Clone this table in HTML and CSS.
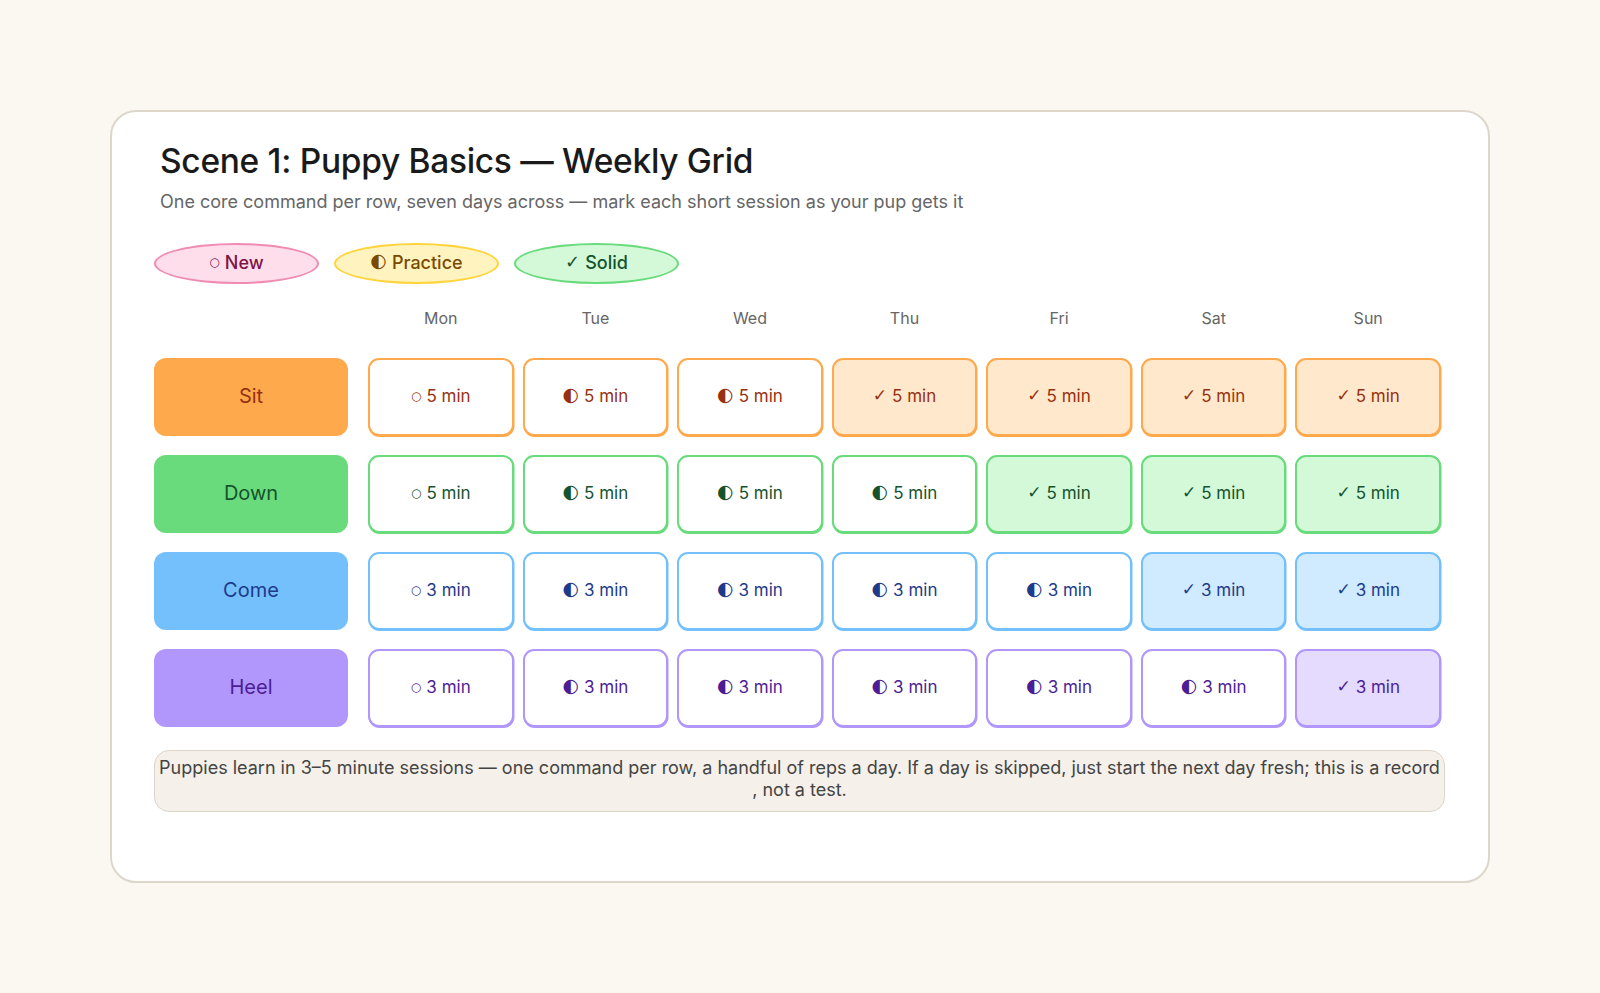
FILE: index.html
```html
<!DOCTYPE html>
<html lang="en">
<head>
<meta charset="utf-8">
<title>Scene 1: Puppy Basics — Weekly Grid</title>
<link rel="stylesheet" href="styles.css">
</head>
<body>
<main class="card">
  <header class="head">
    <h1 class="title">Scene 1: Puppy Basics — Weekly Grid</h1>
    <p class="subtitle">One core command per row, seven days across — mark each short session as your pup gets it</p>
  </header>

  <div class="legend">
    <span class="pill pill-new"><span class="ico ico-o">○</span> New</span>
    <span class="pill pill-practice"><span class="ico ico-h">◐</span> Practice</span>
    <span class="pill pill-solid"><span class="ico ico-c">✓</span> Solid</span>
  </div>

  <div class="grid">
    <div class="corner"></div>
    <div class="day">Mon</div>
    <div class="day">Tue</div>
    <div class="day">Wed</div>
    <div class="day">Thu</div>
    <div class="day">Fri</div>
    <div class="day">Sat</div>
    <div class="day">Sun</div>

    <div class="label sit">Sit</div>
    <div class="cell sit"><span class="ico ico-o">○</span> 5 min</div>
    <div class="cell sit"><span class="ico ico-h">◐</span> 5 min</div>
    <div class="cell sit"><span class="ico ico-h">◐</span> 5 min</div>
    <div class="cell sit done"><span class="ico ico-c">✓</span> 5 min</div>
    <div class="cell sit done"><span class="ico ico-c">✓</span> 5 min</div>
    <div class="cell sit done"><span class="ico ico-c">✓</span> 5 min</div>
    <div class="cell sit done"><span class="ico ico-c">✓</span> 5 min</div>

    <div class="label down">Down</div>
    <div class="cell down"><span class="ico ico-o">○</span> 5 min</div>
    <div class="cell down"><span class="ico ico-h">◐</span> 5 min</div>
    <div class="cell down"><span class="ico ico-h">◐</span> 5 min</div>
    <div class="cell down"><span class="ico ico-h">◐</span> 5 min</div>
    <div class="cell down done"><span class="ico ico-c">✓</span> 5 min</div>
    <div class="cell down done"><span class="ico ico-c">✓</span> 5 min</div>
    <div class="cell down done"><span class="ico ico-c">✓</span> 5 min</div>

    <div class="label come">Come</div>
    <div class="cell come"><span class="ico ico-o">○</span> 3 min</div>
    <div class="cell come"><span class="ico ico-h">◐</span> 3 min</div>
    <div class="cell come"><span class="ico ico-h">◐</span> 3 min</div>
    <div class="cell come"><span class="ico ico-h">◐</span> 3 min</div>
    <div class="cell come"><span class="ico ico-h">◐</span> 3 min</div>
    <div class="cell come done"><span class="ico ico-c">✓</span> 3 min</div>
    <div class="cell come done"><span class="ico ico-c">✓</span> 3 min</div>

    <div class="label heel">Heel</div>
    <div class="cell heel"><span class="ico ico-o">○</span> 3 min</div>
    <div class="cell heel"><span class="ico ico-h">◐</span> 3 min</div>
    <div class="cell heel"><span class="ico ico-h">◐</span> 3 min</div>
    <div class="cell heel"><span class="ico ico-h">◐</span> 3 min</div>
    <div class="cell heel"><span class="ico ico-h">◐</span> 3 min</div>
    <div class="cell heel"><span class="ico ico-h">◐</span> 3 min</div>
    <div class="cell heel done"><span class="ico ico-c">✓</span> 3 min</div>
  </div>

  <p class="note">Puppies learn in 3–5 minute sessions — one command per row, a handful of reps a day. If a day is skipped, just start the next day fresh; this is a record<br>, not a test.</p>
</main>
</body>
</html>
```

FILE: styles.css
```css
* { box-sizing: border-box; }

html, body {
  margin: 0;
  padding: 0;
  background: #fbf8f1;
}

body {
  font-family: Inter, "Noto Sans", "Liberation Sans", sans-serif;
  color: #1d1d1d;
  padding: 110px 110px 0 110px;
}

.card {
  width: 1380px;
  height: 773px;
  background: #ffffff;
  border: 2px solid #ddd6cb;
  border-radius: 26px;
  padding: 27px 43px 0 42px;
}

.head {
  padding-left: 6px;
}

.title {
  margin: 0;
  font-size: 33.5px;
  font-weight: 500;
  line-height: 44px;
  letter-spacing: -0.3px;
  color: #1a1a1a;
}

.subtitle {
  margin: 7px 0 0 0;
  font-size: 18px;
  line-height: 24px;
  color: #666666;
}

.legend {
  display: flex;
  gap: 15px;
  margin-top: 29px;
}

.pill {
  display: flex;
  align-items: center;
  justify-content: center;
  width: 165px;
  height: 41px;
  border-radius: 50%;
  border: 2px solid;
  font-size: 18px;
  font-weight: 500;
  gap: 5px;
  padding-bottom: 3px;
}

.pill-new { background: #ffdeeb; border-color: #f08cb3; color: #7d1544; }
.pill-practice { background: #fff3bf; border-color: #ffd43b; color: #7a4a00; }
.pill-solid { background: #d3f9d8; border-color: #69db7c; color: #14532d; }

.ico {
  font-family: "DejaVu Sans", sans-serif;
  line-height: 1;
}

.ico-o { font-size: 12px; }
.ico-h { font-size: 19px; margin-top: -3px; }
.ico-c { font-size: 17px; }

.pill .ico-c { font-size: 18px; font-weight: 700; }

.grid {
  display: grid;
  grid-template-columns: 205px repeat(7, 1fr);
  grid-template-rows: 42px repeat(4, 78px);
  column-gap: 9px;
  row-gap: 19px;
  margin-top: 13px;
  margin-right: 4px;
}

.day {
  display: flex;
  align-items: center;
  justify-content: center;
  font-size: 16px;
  color: #666666;
}

.label {
  width: 194px;
  border-radius: 12px;
  display: flex;
  align-items: center;
  justify-content: center;
  font-size: 20px;
  font-weight: 400;
  padding-bottom: 3px;
}

.cell {
  border: 2px solid;
  border-radius: 11px;
  background: #ffffff;
  display: flex;
  align-items: center;
  justify-content: center;
  gap: 5px;
  font-size: 17px;
  font-weight: 400;
  padding-bottom: 3px;
}

.label.sit { background: #ffa94d; color: #963111; }
.label.down { background: #69db7c; color: #14532d; }
.label.come { background: #74c0fc; color: #1e3a8a; }
.label.heel { background: #b197fc; color: #4c1d95; }

.cell.sit { border-color: #ffa94d; color: #963111; box-shadow: 0.5px 1px 0 0 #ffa94d; }
.cell.down { border-color: #69db7c; color: #14532d; box-shadow: 0.5px 1px 0 0 #69db7c; }
.cell.come { border-color: #74c0fc; color: #1e3a8a; box-shadow: 0.5px 1px 0 0 #74c0fc; }
.cell.heel { border-color: #b197fc; color: #4c1d95; box-shadow: 0.5px 1px 0 0 #b197fc; }

.cell.sit.done { background: #ffe8cc; }
.cell.down.done { background: #d3f9d8; }
.cell.come.done { background: #d0ebff; }
.cell.heel.done { background: #e5dbff; }

.note {
  margin: 23px 0 0 0;
  background: #f5f0e9;
  border: 1.5px solid #ddd5c9;
  border-radius: 15px;
  padding: 6px 2px 11px 2px;
  font-size: 18px;
  line-height: 21.5px;
  color: #444444;
  text-align: center;
  white-space: nowrap;
}
```
